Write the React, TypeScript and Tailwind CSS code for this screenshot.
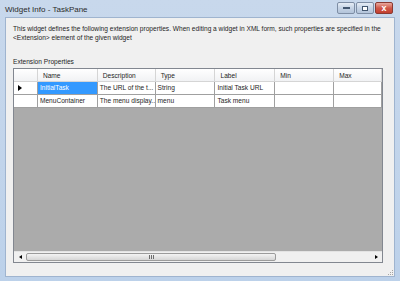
import React from 'react';

const COLS = [
    { key: 'name', title: 'Name', w: 'w-[60px]' },
    { key: 'desc', title: 'Description', w: 'w-[58px]' },
    { key: 'type', title: 'Type', w: 'w-[60px]' },
    { key: 'label', title: 'Label', w: 'w-[60px]' },
    { key: 'min', title: 'Min', w: 'w-[59px]' },
    { key: 'max', title: 'Max', w: 'w-[48px]' },
];

const ROWS = [
    { name: 'InitialTask', desc: 'The URL of the t...', type: 'String', label: 'Initial Task URL', min: '', max: '' },
    { name: 'MenuContainer', desc: 'The menu display...', type: 'menu', label: 'Task menu', min: '', max: '' },
];

const font = "font-['Liberation_Sans',Arial,sans-serif]";

const CaptionButton = ({ kind }: { kind: 'min' | 'max' | 'close' }) => {
    const isClose = kind === 'close';
    return (
        <div
            className={
                'flex items-center justify-center h-[12px] rounded-[2px] border ' +
                (isClose
                    ? 'w-[18px] border-[#8a3a33] bg-gradient-to-b from-[#e8a89e] via-[#d0584a] to-[#c23f2f]'
                    : 'w-[18px] border-[#7e8ea5] bg-gradient-to-b from-[#e6edf6] via-[#c5d3e5] to-[#b3c4da]')
            }
        >
            {kind === 'min' && <div className="w-[7px] h-[2px] bg-white border border-[#435770]" />}
            {kind === 'max' && <div className="w-[6px] h-[5px] border border-[#435770] bg-white" />}
            {kind === 'close' && <span className="text-white text-[9px] leading-none font-bold">x</span>}
        </div>
    );
};

export default function App() {
    return (
        <div className={`w-[400px] h-[281px] flex flex-col bg-gradient-to-b from-[#c8d8ec] to-[#bcd1ea] ${font}`}>
            {/* title bar */}
            <div className="h-[17px] flex items-start justify-between pl-[5px] pr-[7px]">
                <span className="text-[8px] leading-[8px] mt-[6px] text-[#2b2b2b]">Widget Info - TaskPane</span>
                <div className="flex gap-[1px] mt-[2px]">
                    <CaptionButton kind="min" />
                    <CaptionButton kind="max" />
                    <CaptionButton kind="close" />
                </div>
            </div>

            {/* client area */}
            <div className="flex-1 mx-[5px] mb-[4px] bg-[#f0f0f0] border border-[#9fb4cf] flex flex-col pl-[7px] pr-[10px] pt-[6px] relative">
                <p className="text-[6.6px] leading-[9px] text-[#1e1e1e]">
                    This widget defines the following extension properties. When editing a widget in XML form, such properties are specified in the
                    <br />
                    &lt;Extension&gt; element of the given widget
                </p>
                <div className="text-[6.6px] leading-[9px] text-[#1e1e1e] mt-[15px]">Extension Properties</div>

                {/* grid */}
                <div className="mt-[2px] w-[370px] h-[195px] border border-[#828790] bg-[#ababab] flex flex-col text-[6.6px] text-[#1e1e1e]">
                    <div className="flex h-[13px] bg-gradient-to-b from-white to-[#f1f2f4] border-b border-[#d5d5d5]">
                        <div className="w-[24px] border-r border-[#d5d5d5]" />
                        {COLS.map(c => (
                            <div key={c.key} className={`${c.w} border-r border-[#d5d5d5] pl-[5px] leading-[13px]`}>
                                {c.title}
                            </div>
                        ))}
                    </div>
                    {ROWS.map((r, i) => (
                        <div key={i} className="flex h-[13px] bg-white border-b border-[#a0a0a0]">
                            <div className="w-[24px] border-r border-[#a0a0a0] bg-white flex items-center pl-[4px]">
                                {i === 0 && (
                                    <div className="w-0 h-0 border-y-[3px] border-y-transparent border-l-[4px] border-l-black" />
                                )}
                            </div>
                            {COLS.map(c => (
                                <div
                                    key={c.key}
                                    className={
                                        `${c.w} border-r border-[#a0a0a0] pl-[2px] leading-[12px] whitespace-nowrap overflow-hidden ` +
                                        (i === 0 && c.key === 'name' ? 'bg-[#3399ff] text-white' : '')
                                    }
                                >
                                    {(r as Record<string, string>)[c.key]}
                                </div>
                            ))}
                        </div>
                    ))}
                    <div className="flex-1" />

                    {/* horizontal scrollbar */}
                    <div className="h-[11px] flex bg-[#f0f0f0] border-t border-[#e3e3e3]">
                        <div className="w-[12px] flex items-center justify-center">
                            <div className="w-0 h-0 border-y-[2px] border-y-transparent border-r-[3px] border-r-black" />
                        </div>
                        <div className="w-[250px] my-[1px] rounded-[2px] border border-[#9b9b9b] bg-gradient-to-b from-[#f3f3f3] to-[#d6d6d6] flex items-center justify-center gap-[1px]">
                            <div className="w-[1px] h-[4px] bg-[#6d6d6d]" />
                            <div className="w-[1px] h-[4px] bg-[#6d6d6d]" />
                            <div className="w-[1px] h-[4px] bg-[#6d6d6d]" />
                        </div>
                        <div className="flex-1" />
                        <div className="w-[12px] flex items-center justify-center">
                            <div className="w-0 h-0 border-y-[2px] border-y-transparent border-l-[3px] border-l-black" />
                        </div>
                    </div>
                </div>

                {/* resize grip */}
                <div className="absolute right-[1px] bottom-[1px] grid grid-cols-3 gap-[1px]">
                    <div className="w-[1px] h-[1px]" />
                    <div className="w-[1px] h-[1px]" />
                    <div className="w-[1px] h-[1px] bg-[#a6a6a6]" />
                    <div className="w-[1px] h-[1px]" />
                    <div className="w-[1px] h-[1px] bg-[#a6a6a6]" />
                    <div className="w-[1px] h-[1px] bg-[#a6a6a6]" />
                    <div className="w-[1px] h-[1px] bg-[#a6a6a6]" />
                    <div className="w-[1px] h-[1px] bg-[#a6a6a6]" />
                    <div className="w-[1px] h-[1px] bg-[#a6a6a6]" />
                </div>
            </div>
        </div>
    );
}
